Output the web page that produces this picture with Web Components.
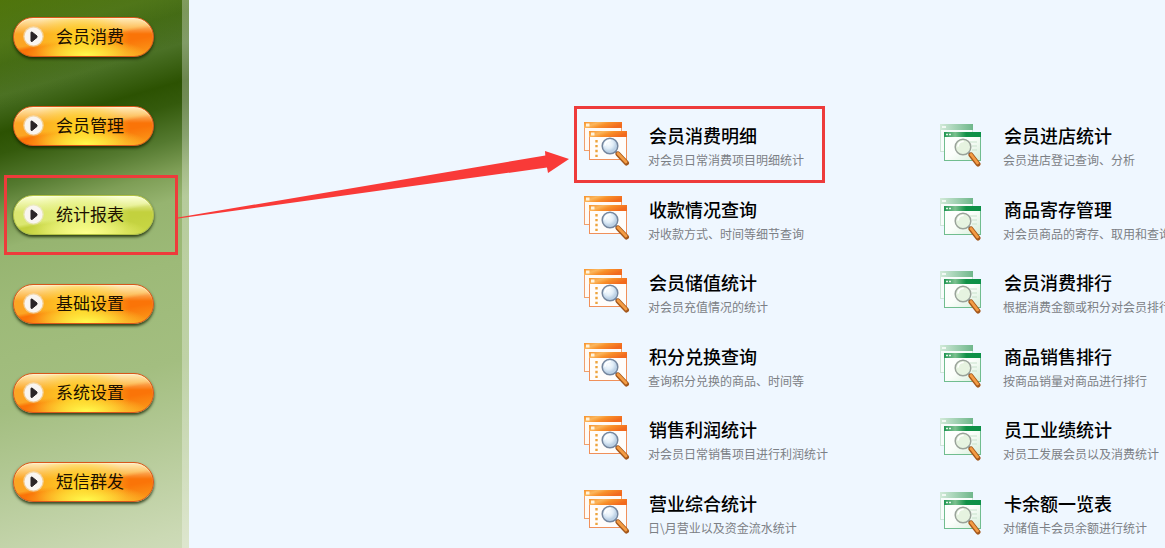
<!DOCTYPE html>
<html lang="zh-CN">
<head>
<meta charset="utf-8">
<title>统计报表</title>
<style>
html, body { margin: 0; }
body { font-family: "Noto Sans CJK SC", "Noto Sans", sans-serif; background: #eff7ff; }
</style>
</head>
<body>
<member-app></member-app>
<script>
const define = (name, html, setup) => {
  const tpl = document.createElement('template');
  tpl.innerHTML = html;
  customElements.define(name, class extends HTMLElement {
    constructor() {
      super();
      this.attachShadow({ mode: 'open' }).append(tpl.content.cloneNode(true));
    }
    connectedCallback() { if (setup) setup(this); }
  });
};

define('nav-button', `
<style>
:host { display: block; position: relative; --edge: #d8571a; --low: #fa7408; --mid: #fca524; --glow: #fff84a; --core: #ffd020; --top: #ffe9b4; --foot: #fba01c; }
:host([active]) { --edge: #b3c244; --low: #c3d13e; --mid: #dbe770; --glow: #fdff8c; --core: #e6f27c; --top: #fbffd2; --foot: #c9d846; }
button {
  display: flex; align-items: center; gap: 12px; width: 100%; height: 40px; padding: 0 9px 2px;
  border: 1px solid var(--edge); border-radius: 20px; font: inherit; font-size: 17px; line-height: 24px; color: #1c1000;
  background:
    radial-gradient(ellipse 44% 42% at 52% 96%, var(--glow), transparent),
    radial-gradient(ellipse 36% 80% at 48% 56%, var(--core) 10%, transparent),
    linear-gradient(var(--top) 2%, transparent 42%),
    linear-gradient(170deg, var(--mid) 30%, var(--mid) 48%, var(--low) 54%, var(--low) 68%, var(--foot) 100%);
  box-shadow: 0 2px 3px rgba(20, 35, 0, .8), inset 0 1px 1px rgba(255, 255, 255, .35);
}
svg { display: block; flex: none; }
:host([marked])::after { content: ""; position: absolute; inset: -20px -24px -20px -9px; border: 3px solid #ee3b3b; }
</style>
<button type="button">
  <svg width="21" height="21" viewBox="0 0 21 21" aria-hidden="true">
    <circle cx="10.500" cy="10.500" r="10.300" fill="#efe6d8" fill-opacity=".6"/>
    <circle cx="10.500" cy="10.500" r="9" fill="#f9f5f1"/>
    <path d="M8 6.200 9 6l5 4v1.400l-5 4.100-1-.300z" fill="#2a2426" stroke="#2a2426" stroke-width="1" stroke-linejoin="round"/>
  </svg>
  <span><slot></slot></span>
</button>`);

define('side-nav', `
<style>
:host {
  display: block; box-sizing: border-box; width: 189px; flex: none; padding: 17px 35px 45px 13px; position: relative;
  background:
    linear-gradient(90deg, transparent 182px, rgba(255, 255, 255, .3) 182px),
    linear-gradient(160deg, rgba(85, 120, 0, .6), rgba(85, 120, 0, 0) 18%),
    linear-gradient(164deg, #47701c 0, #4d7524 40px, #41691a 62px, #4b7126 92px, #2c5202 128px, #345a0c 148px, #557a30 182px, #7e9e56 212px, #96b470 240px, #9dba78 300px, #a3be80 395px, #b2c894 460px, #cbd9b4 560px, #d6e1c4 620px);
}
nav { display: grid; gap: 49px; }
</style>
<nav aria-label="主菜单">
  <nav-button>会员消费</nav-button>
  <nav-button>会员管理</nav-button>
  <nav-button active marked>统计报表</nav-button>
  <nav-button>基础设置</nav-button>
  <nav-button>系统设置</nav-button>
  <nav-button>短信群发</nav-button>
</nav>`);

const lens = (cx, cy, ex, ey, tint) => `
  <path d="M${cx + 5} ${cy + 5} ${cx + 8} ${cy + 8}" stroke="#8d8f96" stroke-width="2.500"/>
  <path d="M${cx + 8} ${cy + 8} ${ex} ${ey}" stroke="#a4581c" stroke-width="5" stroke-linecap="round"/>
  <path d="M${cx + 8} ${cy + 7.5} ${ex - .5} ${ey - 1}" stroke="#f49c44" stroke-width="2.800" stroke-linecap="round"/>
  <circle cx="${cx}" cy="${cy}" r="7.800" fill="url(#glass)" stroke="${tint}" stroke-width="1.500"/>
  <path d="M${cx - 5} ${cy - 1}a5.500 5.500 0 0 1 5-4.500" fill="none" stroke="#fff" stroke-width="1.600" stroke-linecap="round"/>`;

define('report-icon', `
<style>
:host { display: block; width: 46px; height: 46px; flex: none; }
svg { display: none; }
:host([tone="orange"]) .orange, :host([tone="green"]) .green { display: block; }
</style>
<svg class="orange" width="46" height="46" viewBox="0 0 46 46" aria-hidden="true">
  <defs>
    <linearGradient id="bar" y2=".4"><stop offset="0" stop-color="#f7922c"/><stop offset=".35" stop-color="#fbb65c"/><stop offset=".6" stop-color="#f8902a"/><stop offset="1" stop-color="#f26a1e"/></linearGradient>
    <radialGradient id="glass" cx=".4" cy=".35"><stop offset="0" stop-color="#fafdff"/><stop offset=".6" stop-color="#e2eef8"/><stop offset="1" stop-color="#bdd2e6"/></radialGradient>
  </defs>
  <rect x=".5" y="1.500" width="37" height="28" fill="#fffaf5" stroke="#f0a06c"/>
  <rect y="1" width="38" height="6" fill="url(#bar)"/>
  <rect x="2" y="2.500" width="3.500" height="3" fill="#fff3dc"/>
  <rect x="5.500" y="10.500" width="37" height="28" fill="#fffdfb" stroke="#f0905a"/>
  <rect x="5" y="10" width="38" height="6" fill="url(#bar)"/>
  <rect x="7" y="11.500" width="3.500" height="3" fill="#fff3dc"/>
  <path d="M12.500 19v17" stroke="#eda43c" stroke-width="2.400" stroke-dasharray="2.400 2.500"/>
  ${lens(26, 25, 42.5, 42, '#75869e')}
</svg>
<svg class="green" width="46" height="46" viewBox="0 0 46 46" aria-hidden="true">
  <defs>
    <linearGradient id="fade"><stop offset="0" stop-color="#d2ead9"/><stop offset="1" stop-color="#6fb78b"/></linearGradient>
    <linearGradient id="leaf"><stop offset="0" stop-color="#209652"/><stop offset=".3" stop-color="#7cc08f"/><stop offset=".6" stop-color="#119148"/><stop offset="1" stop-color="#0b9047"/></linearGradient>
    <linearGradient id="pane" x2="1" y2="1"><stop offset="0" stop-color="#fff"/><stop offset=".5" stop-color="#fbfefb"/><stop offset="1" stop-color="#d5edd8"/></linearGradient>
  </defs>
  <rect x="1.500" y="3.500" width="32" height="27" fill="#f8fcfb" stroke="#cfe6da"/>
  <rect x="1" y="3" width="33" height="6" fill="url(#fade)"/>
  <path d="M3 6h4" stroke="#fff" stroke-width="1.500"/>
  <rect x="5.500" y="11.500" width="36" height="28" fill="url(#pane)" stroke="#71bd8f"/>
  <rect x="5" y="11" width="37" height="5" fill="url(#leaf)"/>
  <path d="M7 13.500h5" stroke="#e4f6e8" stroke-width="1.600" stroke-dasharray="2 1"/>
  <path d="M31 21h7M33 25h5M33 29h5" stroke="#c9e2cd"/>
  ${lens(24, 26, 39, 43, '#9aa39a').replace('url(#glass)', '#e6f3e0')}
</svg>`);

define('report-item', `
<style>
:host { display: block; position: relative; min-width: 0; }
a { display: flex; gap: 18px; text-decoration: none; color: #000; white-space: nowrap; }
h2 { margin: 1px 0 0 1px; font-size: 18px; line-height: 26px; font-weight: 500; }
p { margin: 4px 0 0; font-size: 12px; line-height: 16px; color: #7c8085; }
:host([marked])::after { content: ""; position: absolute; top: -15px; left: -10px; width: 245px; height: 71px; border: 3px solid #ee3b3b; }
</style>
<a href="#"><report-icon></report-icon><div><h2><slot></slot></h2><p></p></div></a>`, el => {
  el.shadowRoot.querySelector('report-icon').setAttribute('tone', el.getAttribute('tone'));
  el.shadowRoot.querySelector('p').textContent = el.getAttribute('note');
});

define('report-grid', `
<style>
:host { display: block; flex: 1; min-width: 0; overflow: hidden; padding: 121px 0 0 395px; box-sizing: border-box; }
section { display: grid; grid-template-columns: 355px 1fr; grid-template-rows: repeat(2, 74px 73px) 74px 46px; }
</style>
<section>
  <report-item tone="orange" marked note="对会员日常消费项目明细统计">会员消费明细</report-item>
  <report-item tone="green" note="会员进店登记查询、分析">会员进店统计</report-item>
  <report-item tone="orange" note="对收款方式、时间等细节查询">收款情况查询</report-item>
  <report-item tone="green" note="对会员商品的寄存、取用和查询">商品寄存管理</report-item>
  <report-item tone="orange" note="对会员充值情况的统计">会员储值统计</report-item>
  <report-item tone="green" note="根据消费金额或积分对会员排行">会员消费排行</report-item>
  <report-item tone="orange" note="查询积分兑换的商品、时间等">积分兑换查询</report-item>
  <report-item tone="green" note="按商品销量对商品进行排行">商品销售排行</report-item>
  <report-item tone="orange" note="对会员日常销售项目进行利润统计">销售利润统计</report-item>
  <report-item tone="green" note="对员工发展会员以及消费统计">员工业绩统计</report-item>
  <report-item tone="orange" note="日\\月营业以及资金流水统计">营业综合统计</report-item>
  <report-item tone="green" note="对储值卡会员余额进行统计">卡余额一览表</report-item>
</section>`);

define('member-app', `
<style>
:host { display: flex; position: relative; min-height: 100vh; overflow: hidden; }
.arrow { position: absolute; left: 178px; top: 150px; pointer-events: none; }
</style>
<side-nav></side-nav>
<report-grid></report-grid>
<svg class="arrow" width="392" height="70" viewBox="0 0 392 70" aria-hidden="true">
  <path d="M0 67.500 367.300 5.500 367 1 391 9 370 23 369 17.500 0 68.500z" fill="#f93a38"/>
</svg>`);
</script>
</body>
</html>
